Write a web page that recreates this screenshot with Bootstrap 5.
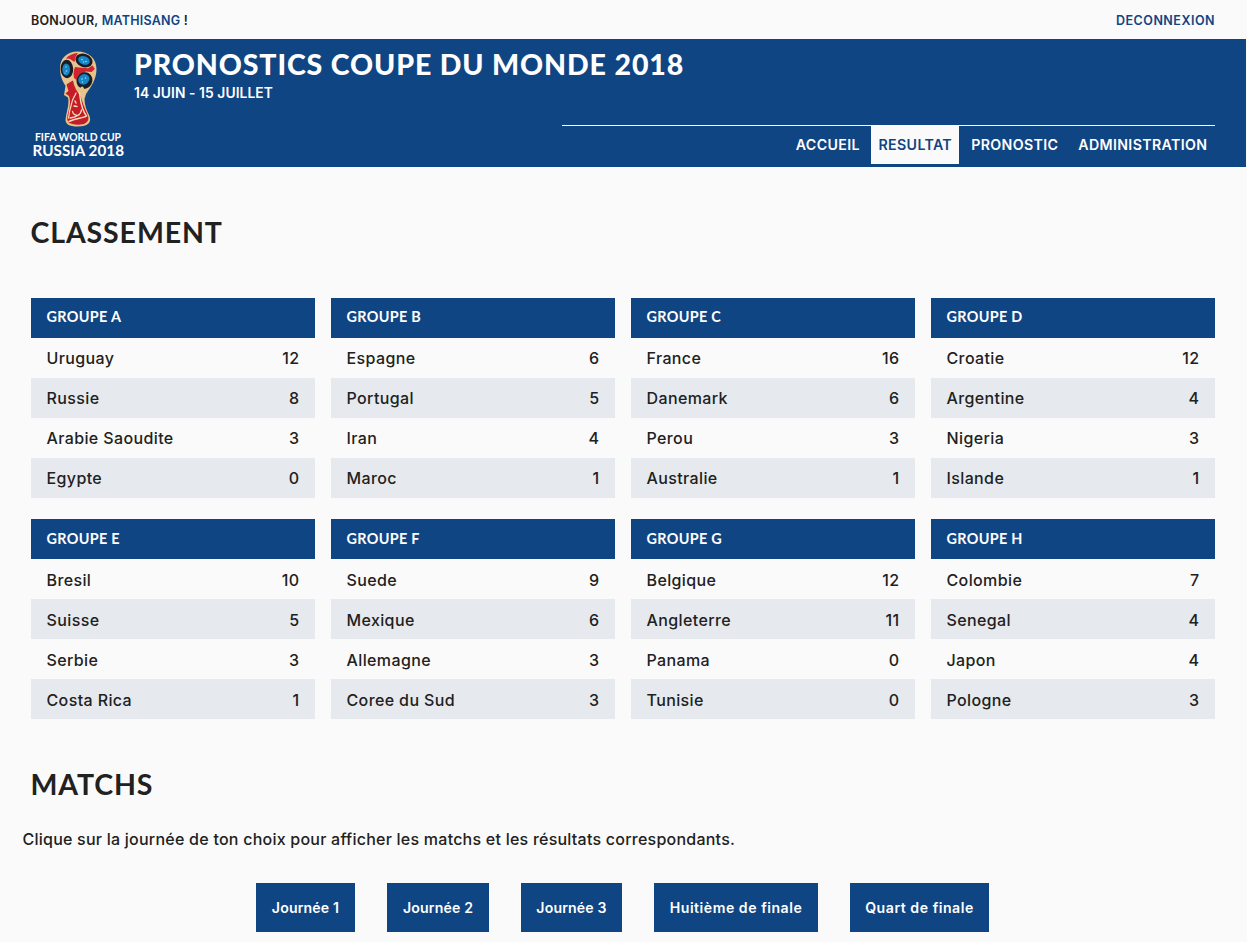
<!DOCTYPE html>
<html lang="fr">
<head>
<meta charset="utf-8">
<meta name="viewport" content="width=device-width, initial-scale=1">
<title>Pronostics Coupe du Monde 2018</title>
<link href="https://cdn.jsdelivr.net/npm/bootstrap@5.3.0/dist/css/bootstrap.min.css" rel="stylesheet">
<style>
  :root { --wc-blue: #104583; --wc-paper: #fafafa; --wc-stripe: #e6eaee; --wc-ink: #212121; }
  html { overflow: hidden; }
  body { font-family: Inter, "Liberation Sans", sans-serif; font-size: 16px; font-weight: 500; letter-spacing: .38px; color: var(--wc-ink); background: var(--wc-paper); padding-right: 1px; }
  a { text-decoration: none; color: var(--wc-blue); }
  .wrap { max-width: 1184px; margin: 0 auto; }
  .display-face { font-family: Lato, "Open Sans", sans-serif; font-weight: 700; }
  .top-line { height: 39px; padding-top: 3px; font-size: 12.5px; font-weight: 600; letter-spacing: .25px; }
  .top-line a.logout { letter-spacing: .5px; }
  .site-head { background: var(--wc-blue); height: 128px; color: #fff; }
  .emblem { width: 103px; height: 128px; flex: none; }
  .emblem svg { display: block; margin-left: -1px; }
  .site-title { font-size: 28.5px; font-weight: 900; line-height: 34px; letter-spacing: .88px; margin: 8px 0 0; }
  .site-date { font-size: 13.8px; line-height: 20px; font-weight: 600; letter-spacing: .08px; margin: 2px 0 0; }
  .menu-bar { width: 653px; border-top: 1px solid #fff; margin-top: 22px; }
  .menu-bar a { height: 38px; line-height: 38px; padding: 0; text-align: center; color: #fff; font-size: 14.2px; font-weight: 600; letter-spacing: .35px; text-indent: .6px; }
  .menu-bar a.active { background: var(--wc-paper); color: var(--wc-blue); }
  .w-acc { width: 79px; } .w-res { width: 88px; } .w-pro { width: 103px; } .w-adm { width: 145px; }
  .section-title { font-size: 28.5px; line-height: 40px; letter-spacing: .88px; margin: 0 0 0 -.5px; }
  .standings-title { padding: 45px 0 46px; }
  .matches-title { padding: 45px 0 23px; }
  .groups { column-gap: 16px; row-gap: 21px; display: grid; grid-template-columns: repeat(4, 1fr); }
  .group-box > * { height: 40px; padding: 0 15.500px; line-height: 41px; margin: 0; }
  .group-box h3 { background: var(--wc-blue); color: #fff; font-size: 14.4px; line-height: 38px; letter-spacing: .33px; }
  .group-box > :nth-child(odd):not(h3) { background: var(--wc-stripe); }
  .group-box:nth-child(n+5) > * { line-height: 43px; }
  .group-box:nth-child(n+5) h3 { line-height: 40px; }
  .hint { margin: 0 0 0 -8.5px; line-height: 24px; letter-spacing: .235px; }
  .day-list { gap: 32px; padding: 32px 2px 0 0; }
  .day-btn { --bs-btn-color: #fff; --bs-btn-bg: var(--wc-blue); --bs-btn-border-radius: 0; --bs-btn-border-width: 0; height: 49px; padding: 0 0 0 1px; font-size: 14.1px; font-weight: 600; letter-spacing: .16px; }
  .day-btn.spaced { letter-spacing: .53px; }
</style>
</head>
<body>
<div class="wrap top-line d-flex justify-content-between align-items-center">
  <div>BONJOUR, <a href="#">MATHISANG</a> !</div>
  <a href="#" class="logout">DECONNEXION</a>
</div>

<header class="site-head">
  <div class="wrap d-flex">
    <a href="#" class="emblem" aria-label="Accueil">
      <svg width="104" height="128" viewBox="30 39 104 128">
        <!-- gold silhouette -->
        <path d="M77.500 51.500C67 51.500 60 58.500 60 68C60 76 62.500 81 65.500 86L64 95L68 97.500C69.500 103 67 110 65.600 119C65 124 69 126.500 78 126.500C88 126.500 92.500 122 89 115C86.500 110 84.500 105 84.500 99L86 94C91 87 96.500 79 96.500 69C96.500 58.500 88.500 51.500 77.500 51.500Z" fill="#e6c48c"/>
        <!-- red globe panels -->
        <path d="M66 58.500Q70 53.500 78 53L75.500 57L74.500 62L69.500 58.700ZM75 67L79 67.500L88 68.200L92.500 65.500L94.800 69L91.500 72L86 71.500L78.500 75.500L76.500 80L74 78L73.500 74L74 70Z" fill="#d0232b"/>
        <!-- red base -->
        <path d="M66.500 84.500Q70 82 73 80.500Q74.500 89 80.500 96Q83.500 106 87.500 114.500Q90.500 121.500 84 124Q76 126 69 123Q66 120 68 113Q71.500 102 69 96L65.500 93.500L68.500 91Z" fill="#c61c28"/>
        <g fill="none" stroke="#f3dfbc" stroke-linecap="round">
          <path d="M76 93C74.500 97 72 99 71.500 104C69.500 110 69 114 68.500 118" stroke-width="1.200"/>
          <path d="M79.500 93C80.500 99 80.500 108 86.500 116C83 118.500 76 118 69 121.500" stroke-width="1.400"/>
          <path d="M70 118C76 117.500 81 114.500 81.500 110M72.500 111.500C73 115 77 116 79 115" stroke-width="1.300"/>
          <path d="M75 101L76 103M74 106L77 106.500" stroke-width="1.400"/>
        </g>
        <g fill="#191d28">
          <ellipse cx="84" cy="60.500" rx="8.800" ry="6.600" transform="rotate(20 84 60.500)"/>
          <ellipse cx="66.900" cy="69" rx="6.300" ry="9.200" transform="rotate(-3 66.900 69)"/>
          <ellipse cx="84.500" cy="80.500" rx="7.800" ry="8.500" transform="rotate(30 84.500 80.500)"/>
        </g>
        <g fill="#1786c6">
          <ellipse cx="84" cy="60.400" rx="6" ry="4.200" transform="rotate(20 84 60.400)"/>
          <ellipse cx="66.200" cy="69.500" rx="3.800" ry="6"/>
          <ellipse cx="83.800" cy="79.300" rx="5.800" ry="5" transform="rotate(-30 83.800 79.300)"/>
        </g>
        <path d="M80.500 87L81.800 93L83 98L86 93L84.500 90L83 86.500Z" fill="#e6c48c"/>
        <g fill="#9fdcf2">
          <circle cx="82" cy="59.500" r=".8"/><circle cx="86" cy="61.500" r=".8"/><circle cx="83.500" cy="62" r=".7"/>
          <circle cx="66" cy="67" r=".7"/><circle cx="66.500" cy="71" r=".8"/><circle cx="65" cy="73" r=".6"/>
          <circle cx="82" cy="79" r=".8"/><circle cx="85.500" cy="78" r=".8"/><circle cx="82.500" cy="82" r=".7"/>
        </g>
        <g fill="#fff" font-family="Lato, sans-serif" font-weight="700" letter-spacing="0">
          <text x="35" y="140.600" font-size="10.600" textLength="86" lengthAdjust="spacingAndGlyphs">FIFA WORLD CUP</text>
          <text x="32.500" y="155.800" font-size="15" textLength="91.500" lengthAdjust="spacingAndGlyphs">RUSSIA 2018</text>
        </g>
      </svg>
    </a>
    <div class="flex-grow-1 d-flex flex-column">
      <h1 class="site-title display-face">PRONOSTICS COUPE DU MONDE 2018</h1>
      <p class="site-date">14 JUIN - 15 JUILLET</p>
      <nav class="menu-bar nav align-self-end justify-content-end gap-1">
        <a class="w-acc" href="#">ACCUEIL</a>
        <a class="w-res active" href="#">RESULTAT</a>
        <a class="w-pro" href="#">PRONOSTIC</a>
        <a class="w-adm" href="#">ADMINISTRATION</a>
      </nav>
    </div>
  </div>
</header>

<main class="wrap">
  <h2 class="section-title standings-title display-face">CLASSEMENT</h2>
  <section class="groups">
    <div class="group-box">
      <h3 class="display-face">GROUPE A</h3>
      <div class="d-flex justify-content-between"><span>Uruguay</span><span>12</span></div>
      <div class="d-flex justify-content-between"><span>Russie</span><span>8</span></div>
      <div class="d-flex justify-content-between"><span>Arabie Saoudite</span><span>3</span></div>
      <div class="d-flex justify-content-between"><span>Egypte</span><span>0</span></div>
    </div>
    <div class="group-box">
      <h3 class="display-face">GROUPE B</h3>
      <div class="d-flex justify-content-between"><span>Espagne</span><span>6</span></div>
      <div class="d-flex justify-content-between"><span>Portugal</span><span>5</span></div>
      <div class="d-flex justify-content-between"><span>Iran</span><span>4</span></div>
      <div class="d-flex justify-content-between"><span>Maroc</span><span>1</span></div>
    </div>
    <div class="group-box">
      <h3 class="display-face">GROUPE C</h3>
      <div class="d-flex justify-content-between"><span>France</span><span>16</span></div>
      <div class="d-flex justify-content-between"><span>Danemark</span><span>6</span></div>
      <div class="d-flex justify-content-between"><span>Perou</span><span>3</span></div>
      <div class="d-flex justify-content-between"><span>Australie</span><span>1</span></div>
    </div>
    <div class="group-box">
      <h3 class="display-face">GROUPE D</h3>
      <div class="d-flex justify-content-between"><span>Croatie</span><span>12</span></div>
      <div class="d-flex justify-content-between"><span>Argentine</span><span>4</span></div>
      <div class="d-flex justify-content-between"><span>Nigeria</span><span>3</span></div>
      <div class="d-flex justify-content-between"><span>Islande</span><span>1</span></div>
    </div>
    <div class="group-box">
      <h3 class="display-face">GROUPE E</h3>
      <div class="d-flex justify-content-between"><span>Bresil</span><span>10</span></div>
      <div class="d-flex justify-content-between"><span>Suisse</span><span>5</span></div>
      <div class="d-flex justify-content-between"><span>Serbie</span><span>3</span></div>
      <div class="d-flex justify-content-between"><span>Costa Rica</span><span>1</span></div>
    </div>
    <div class="group-box">
      <h3 class="display-face">GROUPE F</h3>
      <div class="d-flex justify-content-between"><span>Suede</span><span>9</span></div>
      <div class="d-flex justify-content-between"><span>Mexique</span><span>6</span></div>
      <div class="d-flex justify-content-between"><span>Allemagne</span><span>3</span></div>
      <div class="d-flex justify-content-between"><span>Coree du Sud</span><span>3</span></div>
    </div>
    <div class="group-box">
      <h3 class="display-face">GROUPE G</h3>
      <div class="d-flex justify-content-between"><span>Belgique</span><span>12</span></div>
      <div class="d-flex justify-content-between"><span>Angleterre</span><span>11</span></div>
      <div class="d-flex justify-content-between"><span>Panama</span><span>0</span></div>
      <div class="d-flex justify-content-between"><span>Tunisie</span><span>0</span></div>
    </div>
    <div class="group-box">
      <h3 class="display-face">GROUPE H</h3>
      <div class="d-flex justify-content-between"><span>Colombie</span><span>7</span></div>
      <div class="d-flex justify-content-between"><span>Senegal</span><span>4</span></div>
      <div class="d-flex justify-content-between"><span>Japon</span><span>4</span></div>
      <div class="d-flex justify-content-between"><span>Pologne</span><span>3</span></div>
    </div>
  </section>

  <h2 class="section-title matches-title display-face">MATCHS</h2>
  <p class="hint">Clique sur la journée de ton choix pour afficher les matchs et les résultats correspondants.</p>
  <div class="day-list d-flex justify-content-center">
    <button class="btn day-btn" style="width:99px">Journée 1</button>
    <button class="btn day-btn" style="width:102px">Journée 2</button>
    <button class="btn day-btn" style="width:101px">Journée 3</button>
    <button class="btn day-btn spaced" style="width:164px">Huitième de finale</button>
    <button class="btn day-btn spaced" style="width:139px">Quart de finale</button>
  </div>
</main>
<script src="https://cdn.jsdelivr.net/npm/bootstrap@5.3.0/dist/js/bootstrap.bundle.min.js"></script>
</body>
</html>
